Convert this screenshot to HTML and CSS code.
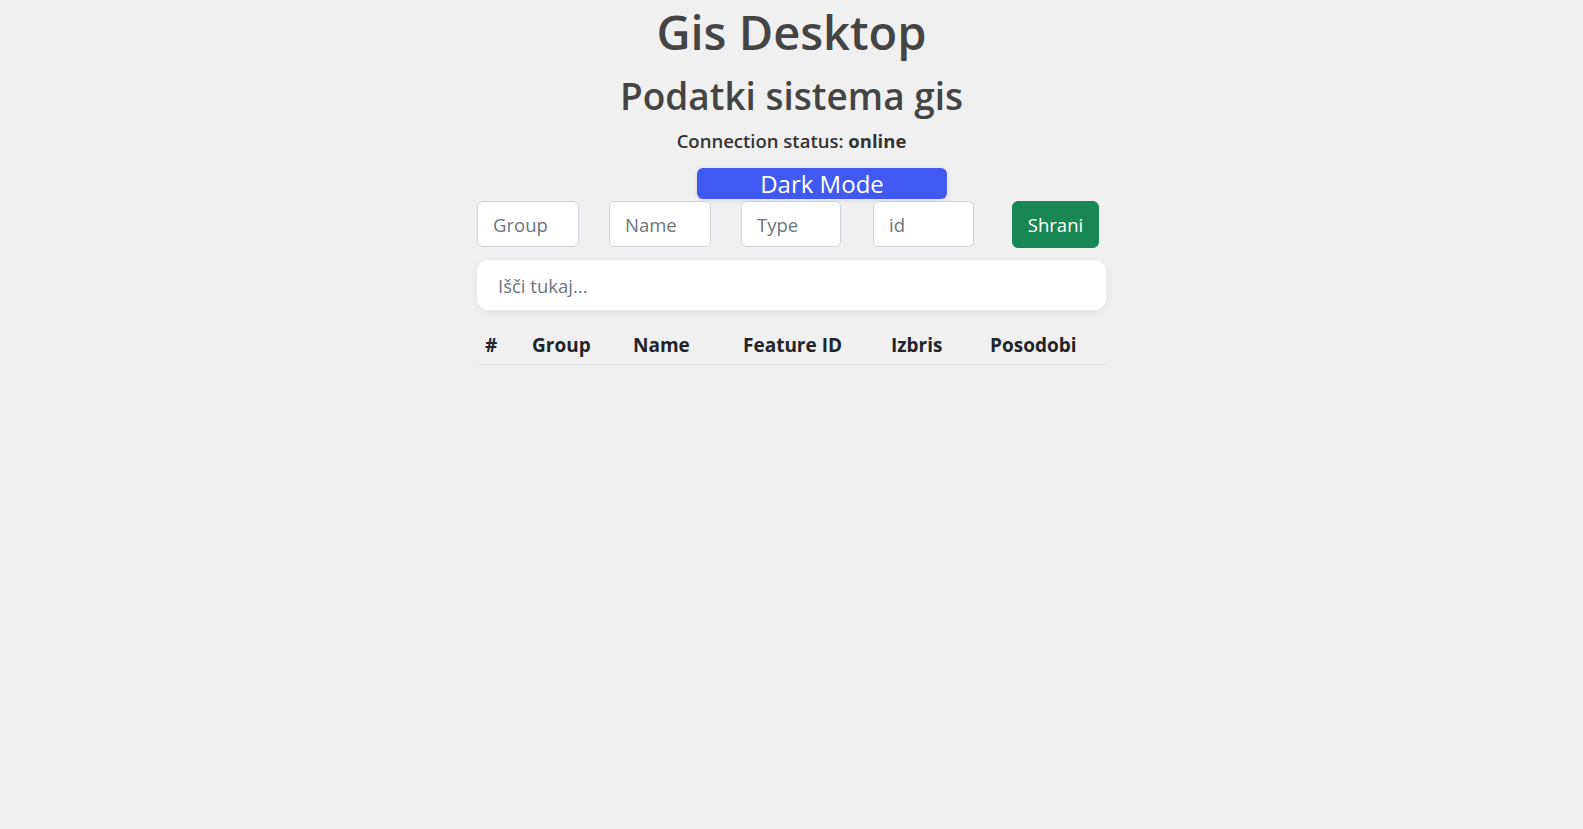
FILE: index.html
```html
<!DOCTYPE html>
<html lang="sl">
<head>
<meta charset="utf-8">
<title>Gis Desktop</title>
<link rel="stylesheet" href="styles.css">
</head>
<body>
<div class="page">
  <h1 class="title">Gis Desktop</h1>
  <h2 class="subtitle">Podatki sistema gis</h2>
  <p class="status">Connection status: <b>online</b></p>
  <div class="toggle-row">
    <button class="dark-btn">Dark Mode</button>
  </div>
  <form class="entry-form">
    <input class="field f-group" type="text" placeholder="Group">
    <input class="field f-name" type="text" placeholder="Name">
    <input class="field f-type" type="text" placeholder="Type">
    <input class="field f-id" type="text" placeholder="id">
    <button type="button" class="save-btn">Shrani</button>
  </form>
  <input class="search" type="text" placeholder="Išči tukaj...">
  <table class="data">
    <thead>
      <tr>
        <th class="c-num">#</th>
        <th class="c-group">Group</th>
        <th class="c-name">Name</th>
        <th class="c-fid">Feature ID</th>
        <th class="c-del">Izbris</th>
        <th class="c-upd">Posodobi</th>
      </tr>
    </thead>
    <tbody></tbody>
  </table>
</div>
</body>
</html>
```
FILE: styles.css
```css
* { box-sizing: border-box; }
html, body {
  margin: 0;
  background: #f0f0f0;
}
body {
  font-family: "Segoe UI", "Open Sans", sans-serif;
  color: #444;
}
.page {
  width: 629px;
  margin: 0 auto;
  display: flex;
  flex-direction: column;
}
.title {
  margin: 0;
  text-align: center;
  font-size: 47px;
  font-weight: 600;
  line-height: 64px;
  color: #444;
}
.subtitle {
  margin: 0;
  margin-top: 3px;
  text-align: center;
  font-size: 37px;
  font-weight: 600;
  line-height: 58px;
  color: #444;
}
.status {
  margin: 0;
  margin-top: 1px;
  text-align: center;
  font-size: 18.5px;
  line-height: 30px;
  color: #333;
  font-weight: 600;
}
.status b { font-weight: 700; }
.toggle-row {
  display: flex;
  padding-left: 220px;
  margin-top: 12px;
}
.dark-btn {
  width: 250px;
  height: 31px;
  border: none;
  border-radius: 6px;
  background: #4059f0;
  color: #fff;
  font-family: inherit;
  font-size: 24px;
  line-height: 31px;
  padding: 0;
  box-shadow: 0 2px 6px rgba(0,0,0,0.08);
}
.entry-form {
  display: flex;
  align-items: flex-start;
  margin-top: 2px;
}
.field {
  height: 46px;
  border: 1px solid #ced4da;
  border-radius: 6px;
  background: #fff;
  font-family: inherit;
  font-size: 18.5px;
  padding: 0 15px;
  color: #212529;
}
.field::placeholder { color: #6c757d; }
.f-group { width: 102px; }
.f-name { width: 102px; margin-left: 30px; }
.f-type { width: 100px; margin-left: 30px; }
.f-id { width: 101px; margin-left: 32px; }
.save-btn {
  width: 87px;
  height: 47px;
  margin-left: 38px;
  border: 1px solid #198754;
  border-radius: 6px;
  background: #198754;
  color: #fff;
  font-family: inherit;
  font-size: 18.5px;
  padding: 0;
}
.search {
  margin-top: 12px;
  width: 629px;
  height: 50px;
  border: none;
  border-radius: 12px;
  background: #fff;
  box-shadow: 0 2px 8px rgba(0,0,0,0.06);
  font-family: inherit;
  font-size: 18.5px;
  padding: 0 21px;
  color: #212529;
}
.search::placeholder { color: #6c757d; }
.data {
  margin-top: 16px;
  width: 629px;
  border-collapse: collapse;
  table-layout: fixed;
}
.data th {
  text-align: left;
  font-size: 19px;
  font-weight: 700;
  color: #212529;
  padding: 5px 8px 5px;
  line-height: 28px;
  border-bottom: 1px solid #dee2e6;
}
.c-num { width: 47px; }
.c-group { width: 101px; }
.c-name { width: 110px; }
.c-fid { width: 148px; }
.c-del { width: 99px; }
.c-upd { width: 124px; }
```
